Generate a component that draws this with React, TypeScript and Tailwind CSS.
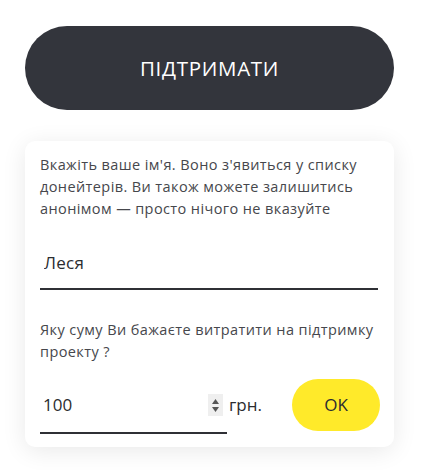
import React, { useState } from 'react';

const font = { fontFamily: '"Open Sans", "Noto Sans", sans-serif' };

const App: React.FC = () => {
  const [name, setName] = useState<string>('Леся');
  const [amount, setAmount] = useState<string>('100');

  return (
    <div className="min-h-[470px] w-[430px] bg-white pt-[26px] pl-[25px]" style={font}>
      <div className="w-[369px]">
        {/* Main support button */}
        <button className="flex h-[84px] w-full items-center justify-center rounded-full bg-[#33353c] text-[20.5px] font-medium tracking-[0.7px] text-white">
          ПІДТРИМАТИ
        </button>

        {/* Donation form card */}
        <div className="mt-[31px] rounded-[10px] bg-white px-[15px] pt-[13px] pb-[13px] shadow-[0_4px_24px_rgba(0,0,0,0.09)]">
          <p className="text-[14.5px] leading-[22px] tracking-[0.4px] text-[#46474c]">
            Вкажіть ваше ім'я. Воно з'явиться у списку донейтерів. Ви також можете залишитись анонімом — просто нічого не вказуйте
          </p>

          <input
            value={name}
            onChange={(e) => setName(e.target.value)}
            className="mt-[16px] block h-[54px] w-[338px] border-b-2 border-[#2f3035] bg-transparent px-[4px] text-[17px] tracking-[0.3px] text-[#2b2c30] outline-none"
          />

          <p className="mt-[29px] text-[14.5px] leading-[22px] tracking-[0.4px] text-[#46474c]">
            Яку суму Ви бажаєте витратити на підтримку проекту ?
          </p>

          <div className="mt-[15px] flex items-start">
            <div className="flex h-[56px] w-[187px] items-center border-b-2 border-[#2f3035]">
              <input
                value={amount}
                onChange={(e) => setAmount(e.target.value)}
                className="w-[168px] bg-transparent px-[3px] text-[17px] text-[#2b2c30] outline-none"
              />
              <div className="flex h-[22px] w-[15px] flex-col items-center justify-center gap-[3px] bg-[#efefef]">
                <svg width="7" height="5" viewBox="0 0 7 5"><path d="M0 5 L3.5 0 L7 5 Z" fill="#555" /></svg>
                <svg width="7" height="5" viewBox="0 0 7 5"><path d="M0 0 L3.5 5 L7 0 Z" fill="#555" /></svg>
              </div>
            </div>
            <span className="ml-[2px] flex h-[54px] items-center text-[17px] text-[#2b2c30]">грн.</span>
            <button className="ml-auto mr-[-1px] mt-[1px] h-[52px] w-[88px] rounded-full bg-[#ffea2a] text-[17px] text-[#2b2c30]">
              OK
            </button>
          </div>
        </div>
      </div>
    </div>
  );
};

export default App;
